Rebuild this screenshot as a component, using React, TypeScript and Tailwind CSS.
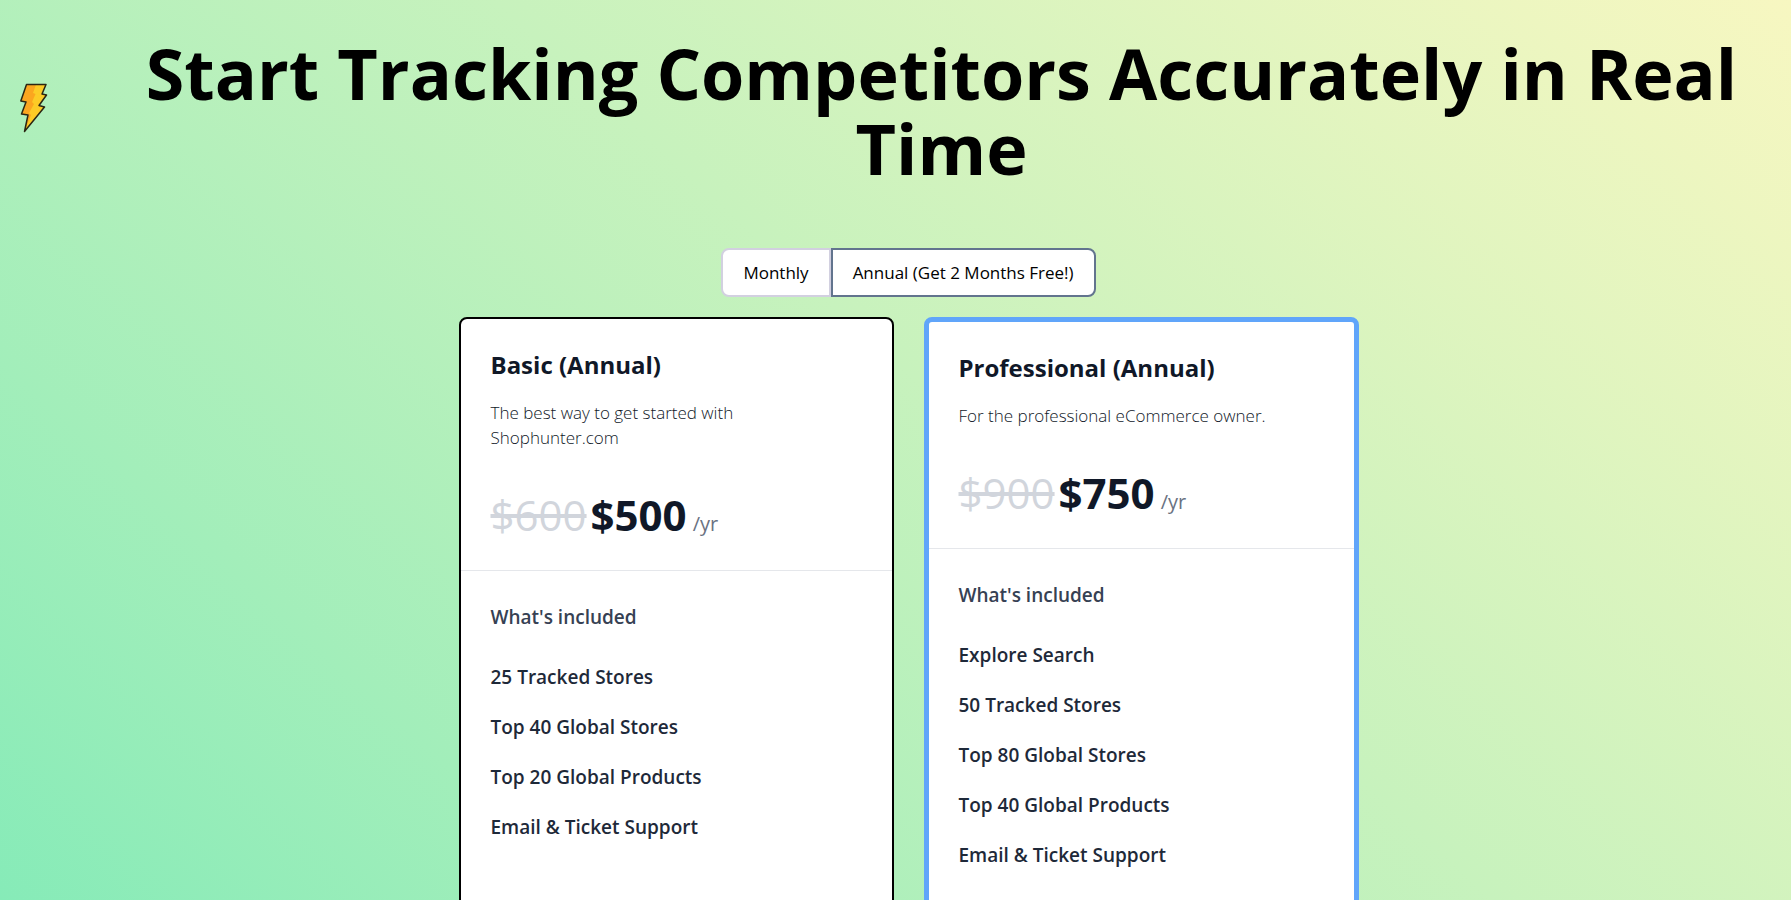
import { useState } from "react";

type Plan = {
  name: string;
  description: string;
  oldPrice: string;
  price: string;
  features: string[];
  cardClass: string;
};

const plans: Plan[] = [
  {
    name: "Basic (Annual)",
    description: "The best way to get started with Shophunter.com",
    oldPrice: "$600",
    price: "$500",
    features: [
      "25 Tracked Stores",
      "Top 40 Global Stores",
      "Top 20 Global Products",
      "Email & Ticket Support",
    ],
    cardClass: "border-2 border-black",
  },
  {
    name: "Professional (Annual)",
    description: "For the professional eCommerce owner.",
    oldPrice: "$900",
    price: "$750",
    features: [
      "Explore Search",
      "50 Tracked Stores",
      "Top 80 Global Stores",
      "Top 40 Global Products",
      "Email & Ticket Support",
    ],
    cardClass: "border-5 border-[#60a5fa]",
  },
];

function Bolt() {
  return (
    <svg viewBox="18 23 30 56" className="w-[30px] h-14 shrink-0" aria-hidden="true">
      <path
        d="M26.5 24.5 L46 24.5 L42 34 L46.5 35 L39 45.5 L44.5 47 L24.5 71.5 L28 55 L21.5 54 L26 42 L20.8 41 Z"
        fill="#fccb26"
      />
      {/* darker left side of the bolt */}
      <path
        d="M26.5 24.5 L36 24.5 L33 33 L35.5 34 L32 42 L34 44 L29 53 L31 55 L24.5 71.5 L28 55 L21.5 54 L26 42 L20.8 41 Z"
        fill="#fba61f"
      />
      <path
        d="M26.5 24.5 L46 24.5 L42 34 L46.5 35 L39 45.5 L44.5 47 L24.5 71.5 L28 55 L21.5 54 L26 42 L20.8 41 Z"
        fill="none"
        stroke="#2b2714"
        strokeWidth="1.5"
        strokeLinejoin="round"
      />
    </svg>
  );
}

function PlanCard({ plan }: { plan: Plan }) {
  return (
    <div className={`rounded-lg bg-white divide-y divide-gray-200 ${plan.cardClass}`}>
      <div className="p-[30px]">
        <h2 className="text-2xl font-bold text-gray-900">{plan.name}</h2>
        <p className="mt-[19px] text-[17px] leading-[25px] font-light text-gray-900">
          {plan.description}
        </p>
        <p className="mt-10 text-[42px] leading-[50px]">
          <span className="text-gray-300 line-through decoration-4">{plan.oldPrice}</span>
          <span className="ml-1 font-bold text-gray-900">{plan.price}</span>
          <span className="ml-1.5 text-xl leading-none font-medium text-gray-500">/yr</span>
        </p>
      </div>
      <div className="px-[30px] pt-8 pb-[120px]">
        <h3 className="text-[19px] leading-7 font-semibold text-gray-700">What's included</h3>
        <ul className="mt-8 space-y-[22px]">
          {plan.features.map((feature) => (
            <li key={feature} className="text-[19px] leading-7 font-semibold text-gray-800">
              {feature}
            </li>
          ))}
        </ul>
      </div>
    </div>
  );
}

export default function App() {
  const [period, setPeriod] = useState("annual");

  return (
    <div className="min-h-screen bg-linear-42 from-[#86ebb8] to-[#f7f7c1] bg-fixed font-['Open_Sans',sans-serif]">
      <div className="flex items-center gap-[62px] px-[18px] pt-9">
        <Bolt />
        <h1 className="flex-1 text-center text-[70px] leading-[75px] font-bold text-black">
          Start Tracking Competitors Accurately in Real Time
        </h1>
      </div>

      <div className="pl-[26px]">
        <div className="mt-[62px] flex justify-center">
          <button
            onClick={() => setPeriod("monthly")}
            aria-pressed={period === "monthly"}
            className="h-[49px] rounded-l-lg border-2 border-[#d2d0e0] bg-white px-5 text-[17px] font-medium"
          >
            Monthly
          </button>
          <button
            onClick={() => setPeriod("annual")}
            aria-pressed={period === "annual"}
            className="h-[49px] rounded-r-lg border-2 border-slate-500 bg-white px-5 text-[17px] font-medium"
          >
            Annual (Get 2 Months Free!)
          </button>
        </div>

        <div className="mx-auto mt-5 grid max-w-[900px] grid-cols-2 gap-[30px]">
          {plans.map((plan) => (
            <PlanCard key={plan.name} plan={plan} />
          ))}
        </div>
      </div>
    </div>
  );
}
